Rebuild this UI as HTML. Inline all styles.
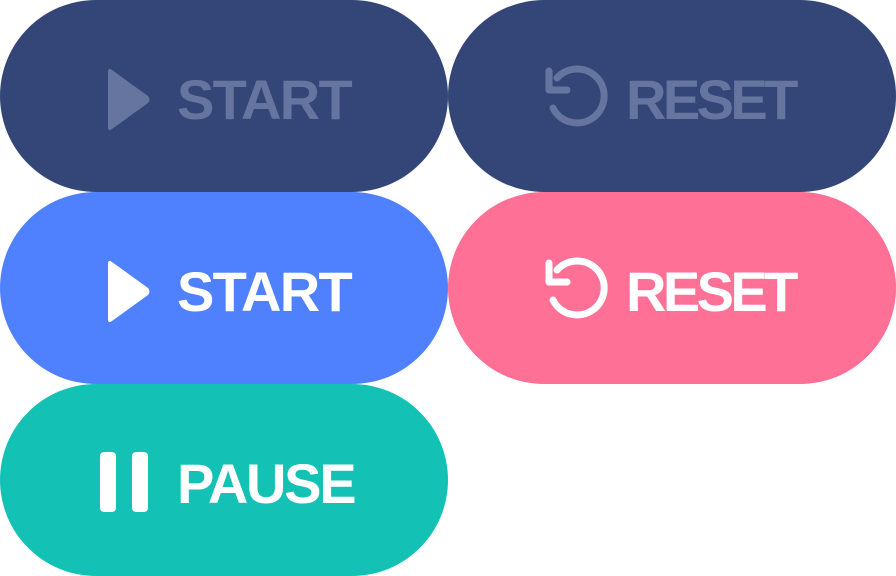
<!DOCTYPE html>
<html><head><style>
html,body{margin:0;padding:0;width:896px;height:576px;background:#fff;overflow:hidden}
.b{position:absolute;width:448px;height:192px;border-radius:96px}
.t{position:absolute;font:bold 56px "Liberation Sans",sans-serif;letter-spacing:-1.7px;line-height:1;top:72px}
.r{letter-spacing:-3.6px}
svg{position:absolute;left:0;top:0}
</style></head><body>
<div class="b" style="left:0;top:0;background:#334677"><div class="t" style="left:177px;color:#66759f">START</div></div>
<div class="b" style="left:448px;top:0;background:#334677"><div class="t r" style="left:178px;color:#66759f">RESET</div></div>
<div class="b" style="left:0;top:192px;background:#4f81ff"><div class="t" style="left:177px;color:#fff">START</div></div>
<div class="b" style="left:448px;top:192px;background:#ff7096"><div class="t r" style="left:178px;color:#fff">RESET</div></div>
<div class="b" style="left:0;top:384px;background:#14c1b5"><div class="t" style="left:177px;color:#fff;letter-spacing:-2.3px">PAUSE</div></div>
<svg width="896" height="576">
<g fill="#66759f"><path d="M108 72 Q108 67 112 70 L148 96 Q151 100 148 103 L112 129 Q108 132 108 127Z"/></g>
<g fill="#fff"><path d="M108 264 Q108 259 112 262 L148 288 Q151 292 148 295 L112 321 Q108 324 108 319Z"/>
<rect x="100" y="452" width="16" height="60" rx="4"/><rect x="132" y="452" width="16" height="60" rx="4"/></g>
<g fill="none" stroke-width="7" stroke-linecap="round" stroke-linejoin="round">
<g stroke="#66759f"><path d="M553 108 A27 27 0 1 0 557 78"/><path d="M549 71 V90 H567"/></g>
<g stroke="#fff"><path d="M553 300 A27 27 0 1 0 557 270"/><path d="M549 263 V282 H567"/></g>
</g>
</svg>
</body></html>
